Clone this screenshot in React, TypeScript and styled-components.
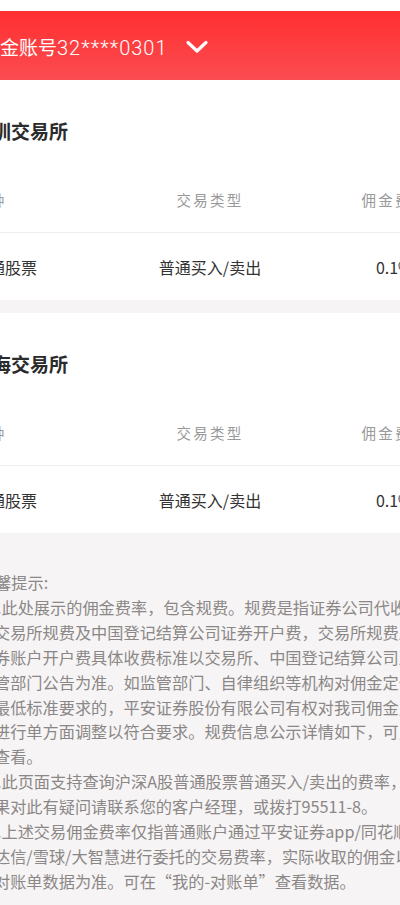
import React from "react";
import styled, { createGlobalStyle } from "styled-components";

const GlobalStyle = createGlobalStyle`
  html, body {
    margin: 0;
    padding: 0;
    background: #f6f4f4;
  }
  body {
    font-family: "Noto Sans CJK SC", "Noto Sans", Roboto, sans-serif;
    overflow: hidden;
  }
`;

const Viewport = styled.div`
  width: 400px;
  height: 905px;
  overflow: hidden;
  background: #f6f4f4;
`;

const Page = styled.div`
  width: 600px;
  margin-left: -44px;
  display: flex;
  flex-direction: column;
`;

const TopStrip = styled.div`
  height: 11px;
  background: #ffffff;
`;

const Header = styled.header`
  height: 69px;
  background: linear-gradient(180deg, #ff2e30 0%, #fd3f42 55%, #fb4c51 100%);
  display: flex;
  align-items: center;
  padding-left: 25px;
  padding-top: 3px;
  box-sizing: border-box;
  gap: 17px;
`;

const AccountText = styled.span`
  color: #ffffff;
  font-size: 19px;
  line-height: 24px;
  white-space: nowrap;
`;

const AccountNumber = styled.span`
  font-family: Roboto, "Noto Sans", sans-serif;
  font-size: 20px;
  letter-spacing: 1px;
  font-weight: 300;
`;

const Chevron = styled.svg`
  width: 24px;
  height: 14px;
  display: block;
`;

const Section = styled.section<{ $gapTop?: boolean }>`
  background: #ffffff;
  margin-top: ${(p) => (p.$gapTop ? "13px" : "0")};
  padding-left: 17px;
`;

const SectionTitle = styled.h2`
  margin: 0;
  padding: 38px 0 23px;
  font-size: 19px;
  line-height: 26px;
  font-weight: 600;
  color: #2b2b2b;
  white-space: nowrap;
`;

const Row = styled.div<{ $head?: boolean }>`
  display: grid;
  grid-template-columns: 160px 154px 216px;
  align-items: center;
  height: ${(p) => (p.$head ? "66px" : "67px")};
  box-sizing: border-box;
  border-bottom: ${(p) => (p.$head ? "1px solid #eeeeee" : "none")};
  margin-left: -17px;
  padding-left: 17px;
`;

const Cell = styled.div<{ $head?: boolean; $align?: "left" | "center" }>`
  text-align: ${(p) => p.$align || "center"};
  white-space: nowrap;
  font-size: ${(p) => (p.$head ? "14.5px" : "16px")};
  letter-spacing: ${(p) => (p.$head ? "2.2px" : "0")};
  color: ${(p) => (p.$head ? "#999999" : "#333333")};
  line-height: 22px;
`;

const Notes = styled.section`
  padding: 37px 0 0 23px;
  color: #8b8787;
  font-size: 16.2px;
  line-height: 24.9px;
`;

const NoteTitle = styled.div`
  white-space: nowrap;
`;

const NoteItem = styled.div`
  padding-left: 15px;
`;

const NoteLine = styled.div<{ $lead?: boolean }>`
  white-space: nowrap;
  margin-left: ${(p) => (p.$lead ? "-6px" : "0")};
`;

type Exchange = { name: string; rate: string };

const exchanges: Exchange[] = [
  { name: "深圳交易所", rate: "0.1‰" },
  { name: "上海交易所", rate: "0.1‰" },
];

const notes: { lead?: boolean; text: string }[][] = [
  [
    { lead: true, text: "1.此处展示的佣金费率，包含规费。规费是指证券公司代收的" },
    { text: "交易所规费及中国登记结算公司证券开户费，交易所规费及中国登记结算公司证" },
    { text: "券账户开户费具体收费标准以交易所、中国登记结算公司及相关监" },
    { text: "管部门公告为准。如监管部门、自律组织等机构对佣金定价有" },
    { text: "最低标准要求的，平安证券股份有限公司有权对我司佣金费率" },
    { text: "进行单方面调整以符合要求。规费信息公示详情如下，可点击" },
    { text: "查看。" },
  ],
  [
    { lead: true, text: "2.此页面支持查询沪深A股普通股票普通买入/卖出的费率，如" },
    { text: "果对此有疑问请联系您的客户经理，或拨打95511-8。" },
  ],
  [
    { lead: true, text: "3.上述交易佣金费率仅指普通账户通过平安证券app/同花顺/通" },
    { text: "达信/雪球/大智慧进行委托的交易费率，实际收取的佣金以" },
    { text: "对账单数据为准。可在“我的-对账单”查看数据。" },
  ],
];

export default function App() {
  return (
    <>
      <GlobalStyle />
      <Viewport>
        <Page>
          <TopStrip />
          <Header>
            <AccountText>
              资金账号<AccountNumber>32****0301</AccountNumber>
            </AccountText>
            <Chevron viewBox="0 0 24 14">
              <polyline
                points="3,2.5 12,11 21,2.5"
                fill="none"
                stroke="#ffffff"
                strokeWidth="3.2"
                strokeLinecap="round"
                strokeLinejoin="round"
              />
            </Chevron>
          </Header>
          {exchanges.map((ex, i) => (
            <Section key={ex.name} $gapTop={i > 0}>
              <SectionTitle>{ex.name}</SectionTitle>
              <Row $head>
                <Cell $head $align="left">品种</Cell>
                <Cell $head>交易类型</Cell>
                <Cell $head>佣金费率</Cell>
              </Row>
              <Row>
                <Cell $align="left">普通股票</Cell>
                <Cell>普通买入/卖出</Cell>
                <Cell>{ex.rate}</Cell>
              </Row>
            </Section>
          ))}
          <Notes>
            <NoteTitle>温馨提示:</NoteTitle>
            {notes.map((item, i) => (
              <NoteItem key={i}>
                {item.map((l, j) => (
                  <NoteLine key={j} $lead={l.lead}>
                    {l.text}
                  </NoteLine>
                ))}
              </NoteItem>
            ))}
          </Notes>
        </Page>
      </Viewport>
    </>
  );
}
